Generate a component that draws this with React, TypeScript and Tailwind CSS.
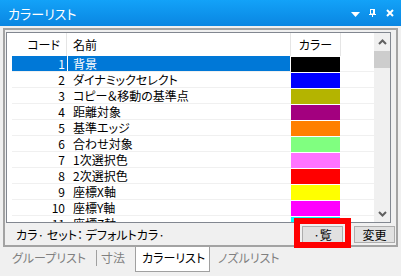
const rows = [
  { code: 1, name: "背景", color: "#000000" },
  { code: 2, name: "ダイナミックセレクト", color: "#0000ff" },
  { code: 3, name: "コピー＆移動の基準点", color: "#b4b400" },
  { code: 4, name: "距離対象", color: "#a3007f" },
  { code: 5, name: "基準エッジ", color: "#ff8000" },
  { code: 6, name: "合わせ対象", color: "#80ff80" },
  { code: 7, name: "1次選択色", color: "#ff73ff" },
  { code: 8, name: "2次選択色", color: "#ff0000" },
  { code: 9, name: "座標X軸", color: "#ffff00" },
  { code: 10, name: "座標Y軸", color: "#ff00ff" },
  { code: 11, name: "座標Z軸", color: "#00ffff" },
];

function Chevron({ up }: { up?: boolean }) {
  return (
    <svg width="9" height="6" viewBox="0 0 9 6">
      <polyline
        points={up ? "1,5 4.5,1.5 8,5" : "1,1 4.5,4.5 8,1"}
        fill="none"
        stroke="#606060"
        strokeWidth="2"
      />
    </svg>
  );
}

export default function App() {
  return (
    <div className="relative h-[276px] w-[401px] overflow-hidden bg-[#f0f0f0] font-['Noto_Sans_CJK_JP',sans-serif] text-[12px] text-black [font-feature-settings:'palt']">
      {/* title bar */}
      <div className="flex h-[26px] items-center justify-between bg-linear-to-b from-[#13a2f8] to-[#0a86e2] pl-2 pr-[7px] text-white">
        <span className="text-[13px] leading-none">カラーリスト</span>
        <div className="flex items-center">
          <svg width="9" height="5" viewBox="0 0 9 5" className="mt-[3px]">
            <polygon points="0,0 9,0 4.5,5" fill="#fff" />
          </svg>
          <svg width="7" height="8" viewBox="0 0 7 8" className="ml-[9px]">
            <rect x="1.5" y="0.5" width="4" height="4.5" fill="none" stroke="#fff" />
            <rect x="0" y="5" width="7" height="1" fill="#fff" />
            <rect x="3" y="5" width="1" height="3" fill="#fff" />
            <rect x="4" y="0" width="1.5" height="5" fill="#fff" />
          </svg>
          <svg width="8" height="8" viewBox="0 0 8 8" className="ml-[10px]">
            <path d="M1 1 L7 7 M7 1 L1 7" stroke="#fff" strokeWidth="2" />
          </svg>
        </div>
      </div>

      {/* panel frame */}
      <div className="ml-[3px] mt-[2px] h-[219px] w-[395px] border-2 border-[#a3a3a3] pt-[2px]">
        <div className="ml-[1px] flex h-[191px] w-[385px] border border-[#828790] bg-white">
          <div className="flex-1 overflow-hidden pl-[5px]">
            {/* header */}
            <div className="flex h-[23px] items-center">
              <div className="h-full w-[55px] border-r border-[#e5e5e5] pr-[6px] text-right leading-[23px]">コード</div>
              <div className="h-full w-[224px] border-r border-[#e5e5e5] pl-[6px] leading-[23px]">名前</div>
              <div className="h-full w-[50px] border-r border-[#e5e5e5] text-center leading-[23px]">カラー</div>
            </div>
            {rows.map((r) => {
              const sel = r.code === 1;
              return (
                <div key={r.code} className="flex h-[16px] border-b border-[#f0f0f0]">
                  <div
                    className={`w-[55px] pr-[2px] text-right leading-[16px] ${sel ? "bg-[#0078d7] text-white" : ""}`}
                  >
                    {r.code}
                  </div>
                  <div
                    className={`w-[223px] border-l border-white pl-[5px] leading-[16px] ${sel ? "bg-[#0078d7] text-white" : ""}`}
                  >
                    {r.name}
                  </div>
                  <div className="w-[51px] px-px pt-px">
                    <div className="h-[15px] w-full" style={{ backgroundColor: r.color }} />
                  </div>
                </div>
              );
            })}
          </div>
          {/* scrollbar */}
          <div className="flex w-[16px] flex-col bg-[#f0f0f0]">
            <div className="flex h-[17px] items-center justify-center">
              <Chevron up />
            </div>
            <div className="mt-px h-[17px] bg-[#cdcdcd]" />
            <div className="flex-1" />
            <div className="flex h-[17px] items-center justify-center">
              <Chevron />
            </div>
          </div>
        </div>

        {/* status row */}
        <div className="flex h-[22px] items-start">
          <span className="ml-[11px] mt-[5px] leading-[14px]">カラ· セット： デフォルトカラ·</span>
          <div className="ml-auto mr-[1px] mt-[3px] flex gap-[11px]">
            <button className="h-[17px] w-[41px] border border-[#adadad] bg-[#e1e1e1] text-[12px] leading-[15px]">·覧</button>
            <button className="h-[17px] w-[41px] border border-[#adadad] bg-[#e1e1e1] text-[12px] leading-[15px]">変更</button>
          </div>
        </div>
      </div>

      {/* tabs */}
      <div className="flex h-[29px] items-start">
        <span className="ml-[12px] mt-[3px] w-[80px] leading-[16px] text-[#808080]">グループリスト</span>
        <span className="ml-[4px] mt-[3px] h-[16px] w-px bg-[#a0a0a0]" />
        <span className="ml-[4px] mt-[3px] w-[30px] leading-[16px] text-[#808080]">寸法</span>
        <div className="ml-[4px] h-[25px] w-[75px] border-x border-b border-[#a0a0a0] bg-white pl-[6px] pt-[3px] leading-[16px]">
          カラーリスト
        </div>
        <span className="ml-[8px] mt-[3px] leading-[16px] text-[#808080]">ノズルリスト</span>
      </div>

      {/* highlight annotation */}
      <div className="absolute left-[294px] top-[218px] h-[30px] w-[57px] border-[6px] border-[#ff0000]" />
    </div>
  );
}
